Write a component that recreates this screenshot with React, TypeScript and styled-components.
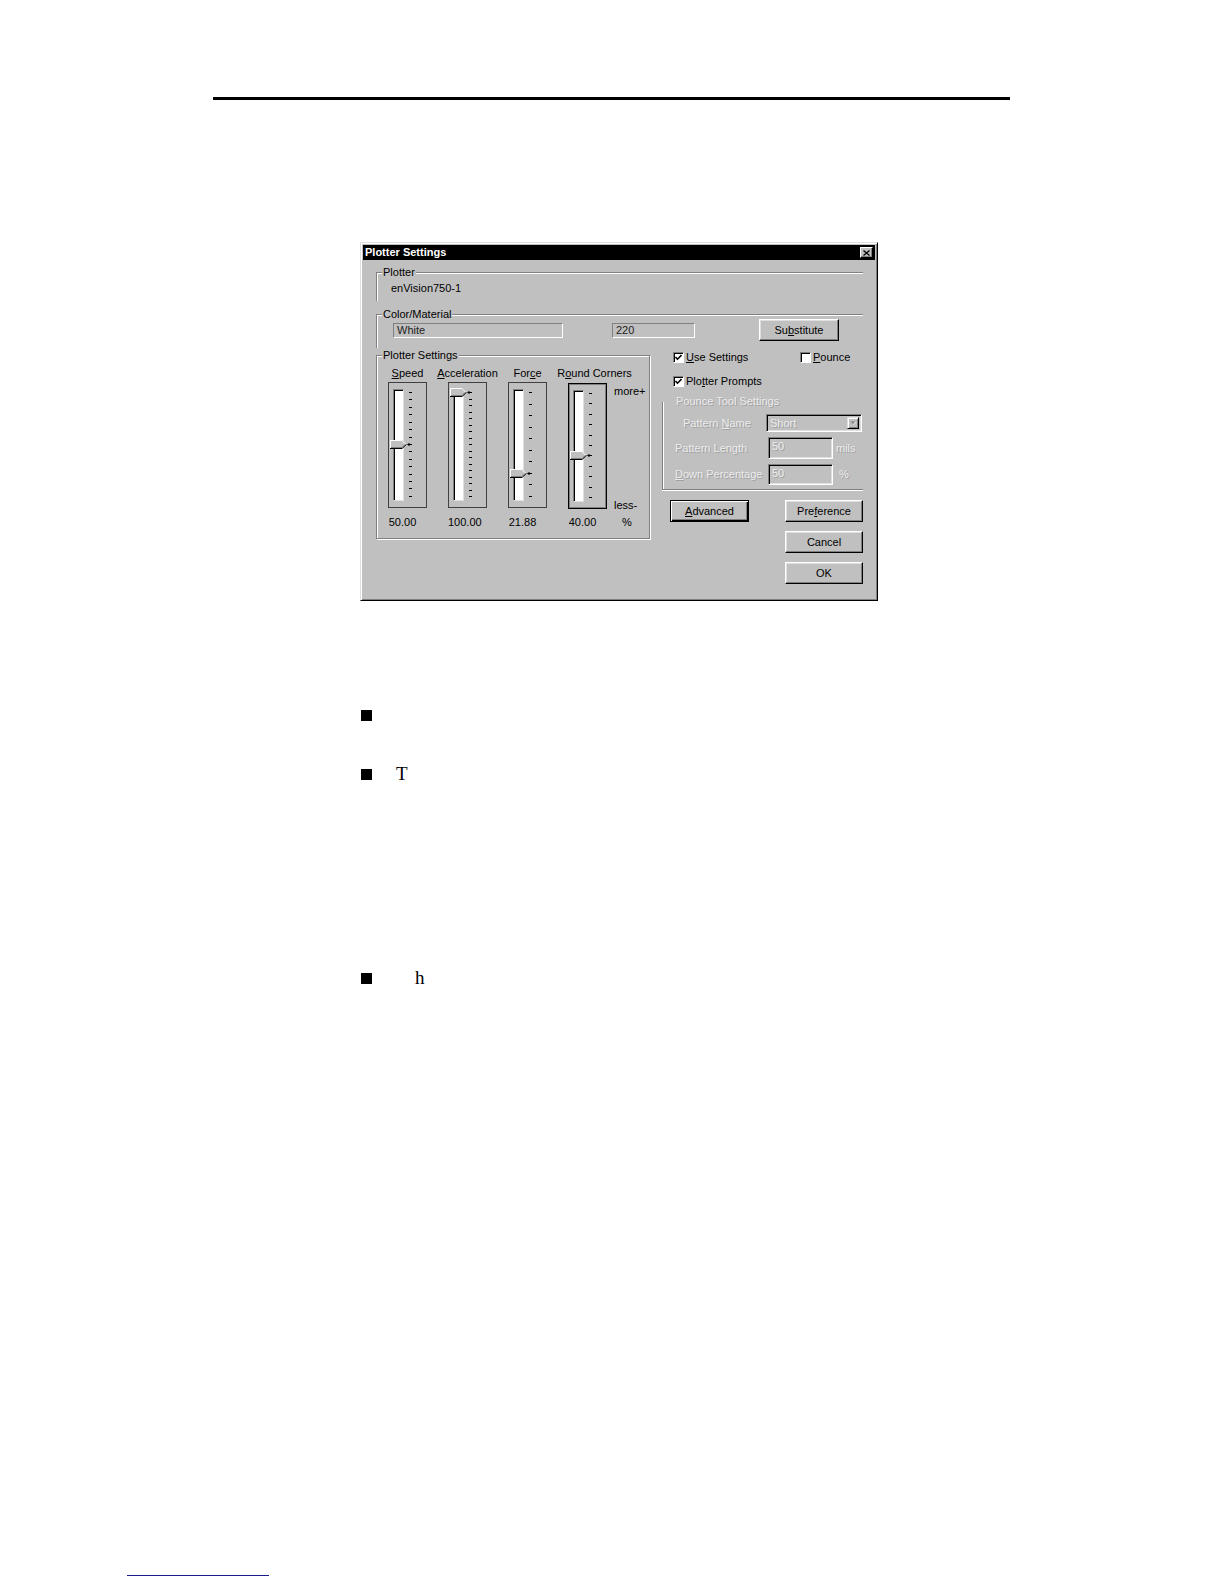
import React from "react";
import styled, { createGlobalStyle, css } from "styled-components";

const GlobalStyle = createGlobalStyle`
  html, body { margin: 0; padding: 0; background: #fff; }
  body { font-family: "Liberation Sans", Arial, sans-serif; }
`;

const disabledText = css`
  color: #ececec;
  text-shadow: 1px 1px 0 #a2a2a2;
`;

const Page = styled.div`
  width: 1224px;
  min-height: 1584px;
  box-sizing: border-box;
  padding-top: 97px;
  background: #fff;
`;

const Rule = styled.div`
  margin-left: 213px;
  width: 797px;
  height: 3px;
  background: #000;
`;

const Dialog = styled.div`
  margin: 142px 0 0 360px;
  width: 518px;
  height: 359px;
  box-sizing: border-box;
  padding: 2px;
  background: #c0c0c0;
  border: 1px solid;
  border-color: #dfdfdf #000 #000 #dfdfdf;
  box-shadow: inset 1px 1px 0 #fff, inset -1px -1px 0 #808080;
  font: 11px "Liberation Sans", Arial, sans-serif;
  color: #000;
`;

const TitleBar = styled.div`
  height: 15px;
  display: flex;
  align-items: center;
  justify-content: space-between;
  padding: 0 2px;
  background: #000;
`;

const TitleText = styled.span`
  color: #fff;
  font-weight: bold;
  line-height: 15px;
`;

const CloseButton = styled.span`
  width: 13px;
  height: 11px;
  box-sizing: border-box;
  display: flex;
  align-items: center;
  justify-content: center;
  background: #c0c0c0;
  border: 1px solid;
  border-color: #fff #000 #000 #fff;
  box-shadow: inset -1px -1px 0 #808080;
`;

const Body = styled.div`
  padding: 12px 12px 0 13px;
`;

type Edges = "tl" | "all" | "lb";

const edgeShadow: Record<Edges, string> = {
  tl: "inset 1px 1px 0 #fff",
  all: "inset 1px 1px 0 #fff, 1px 1px 0 #fff",
  lb: "inset 1px 0 0 #fff, 0 1px 0 #fff",
};

const Group = styled.div<{ $h: number; $w?: number; $edges: Edges; $mt?: number }>`
  position: relative;
  box-sizing: border-box;
  height: ${(p) => p.$h}px;
  ${(p) => p.$w && `width: ${p.$w}px; flex: none;`}
  margin-top: ${(p) => p.$mt ?? 0}px;
  border-left: 1px solid #808080;
  border-top: ${(p) => (p.$edges === "lb" ? "none" : "1px solid #808080")};
  border-right: ${(p) => (p.$edges === "all" ? "1px solid #808080" : "none")};
  border-bottom: ${(p) => (p.$edges === "tl" ? "none" : "1px solid #808080")};
  box-shadow: ${(p) => edgeShadow[p.$edges]};
`;

const Legend = styled.span<{ $left: number; $disabled?: boolean }>`
  position: absolute;
  top: -7px;
  left: ${(p) => p.$left}px;
  padding: 0 1px;
  line-height: 13px;
  background: #c0c0c0;
  white-space: nowrap;
  ${(p) => p.$disabled && disabledText}
`;

const PlotterName = styled.div`
  padding: 9px 0 0 14px;
  line-height: 13px;
`;

const ColorRow = styled.div`
  display: flex;
  align-items: center;
  padding: 4px 0 0 16px;
`;

const FlatField = styled.div<{ $w: number; $mr: number }>`
  width: ${(p) => p.$w}px;
  height: 15px;
  margin-right: ${(p) => p.$mr}px;
  box-sizing: border-box;
  padding: 0 3px;
  line-height: 13px;
  color: #222;
  border: 1px solid;
  border-color: #808080 #fff #fff #808080;
`;

const Button = styled.button<{ $w: number; $default?: boolean; $col?: number }>`
  width: ${(p) => p.$w}px;
  height: 22px;
  box-sizing: border-box;
  padding: 0;
  ${(p) => p.$col && `grid-column: ${p.$col};`}
  background: #c0c0c0;
  font: inherit;
  color: #000;
  border: 1px solid;
  border-color: #fff #000 #000 #fff;
  box-shadow: inset -1px -1px 0 #808080, inset 1px 1px 0 #dfdfdf;
  ${(p) =>
    p.$default &&
    css`
      border-color: #000;
      box-shadow: inset 1px 1px 0 #fff, inset -1px -1px 0 #000, inset -2px -2px 0 #808080;
    `}
`;

const Key = styled.span`
  text-decoration: underline;
  text-underline-offset: 1px;
`;

const mnemonic = (text: string, i: number) => (
  <>
    {text.slice(0, i)}
    <Key>{text[i]}</Key>
    {text.slice(i + 1)}
  </>
);

const MainRow = styled.div`
  display: flex;
  align-items: flex-start;
  gap: 12px;
`;

const SliderArea = styled.div`
  display: flex;
  padding: 11px 0 0 11px;
`;

const Sliders = styled.div`
  display: flex;
  gap: 21px;
`;

const SliderColumn = styled.div`
  width: 39px;
  display: flex;
  flex-direction: column;
  align-items: center;
`;

const ColLabel = styled.div<{ $shift?: number }>`
  line-height: 13px;
  margin: 0 0 2px ${(p) => p.$shift ?? 0}px;
  white-space: nowrap;
`;

const Frame = styled.div<{ $focused?: boolean }>`
  width: 39px;
  height: 126px;
  box-sizing: border-box;
  display: flex;
  align-items: flex-start;
  padding: 6px 0 0 4px;
  border: 1px solid #404040;
  ${(p) =>
    p.$focused &&
    css`
      margin-top: 1px;
      border-color: #000;
      box-shadow: inset 0 0 0 1px #808080;
    `}
`;

const Track = styled.div`
  position: relative;
  width: 11px;
  height: 112px;
  box-sizing: border-box;
  background: #fff;
  border: 1px solid;
  border-color: #808080 #dfdfdf #dfdfdf #808080;
  box-shadow: inset 1px 1px 0 #000;
`;

const Thumb = styled.svg`
  position: absolute;
  left: -4px;
  width: 20px;
  height: 9px;
`;

const Ticks = styled.div`
  height: 105px;
  margin: 3px 0 0 5px;
  display: flex;
  flex-direction: column;
  justify-content: space-between;
`;

const Tick = styled.span`
  width: 3px;
  height: 1px;
  background: #000;
`;

const Value = styled.div<{ $focused?: boolean }>`
  width: 39px;
  box-sizing: border-box;
  margin-top: ${(p) => (p.$focused ? 7 : 8)}px;
  padding-right: 10px;
  line-height: 13px;
  text-align: center;
  white-space: nowrap;
`;

const ScaleColumn = styled.div`
  margin-left: 7px;
  padding-top: 15px;
  display: flex;
  flex-direction: column;
  line-height: 13px;
`;

const ScaleEnds = styled.div`
  height: 130px;
  box-sizing: border-box;
  padding-top: 3px;
  display: flex;
  flex-direction: column;
  justify-content: space-between;
`;

const Percent = styled.div`
  margin-top: 4px;
  padding-left: 8px;
`;

const RightCol = styled.div`
  width: 201px;
  margin-top: 1px;
  display: flex;
  flex-direction: column;
`;

const CheckRow = styled.div<{ $mt?: number }>`
  display: grid;
  grid-template-columns: 127px auto;
  align-items: center;
  height: 16px;
  margin-top: ${(p) => p.$mt ?? 0}px;
  padding-left: 11px;
`;

const CheckItem = styled.label`
  display: flex;
  align-items: center;
  gap: 2px;
  line-height: 13px;
`;

const CheckBox = styled.span`
  width: 11px;
  height: 11px;
  box-sizing: border-box;
  display: flex;
  align-items: center;
  justify-content: center;
  background: #fff;
  border: 1px solid;
  border-color: #808080 #fff #fff #808080;
  box-shadow: inset 1px 1px 0 #000;
`;

const PounceGrid = styled.div`
  display: grid;
  grid-template-columns: 93px 65px auto;
  grid-template-rows: 18px 22px 21px;
  row-gap: 5px;
  align-items: center;
  padding: 12px 0 0 12px;
`;

const DisabledLabel = styled.span<{ $pl?: number }>`
  padding-left: ${(p) => p.$pl ?? 0}px;
  line-height: 13px;
  white-space: nowrap;
  ${disabledText}
`;

const sunken = css`
  box-sizing: border-box;
  background: #c0c0c0;
  border: 1px solid;
  border-color: #808080 #fff #fff #808080;
  box-shadow: inset 1px 1px 0 #000, inset -1px -1px 0 #dfdfdf;
`;

const Combo = styled.div`
  ${sunken}
  grid-column: 2 / span 2;
  width: 96px;
  height: 18px;
  margin-left: -2px;
  display: flex;
  align-items: stretch;
  justify-content: space-between;
  padding: 2px 2px 2px 3px;
  line-height: 12px;
`;

const ComboButton = styled.span`
  width: 12px;
  box-sizing: border-box;
  display: flex;
  align-items: center;
  justify-content: center;
  border: 1px solid;
  border-color: #dfdfdf #000 #000 #dfdfdf;
  box-shadow: inset 1px 1px 0 #fff, inset -1px -1px 0 #808080;
`;

const DisabledInput = styled.div<{ $h: number }>`
  ${sunken}
  width: 65px;
  height: ${(p) => p.$h}px;
  padding: 2px 0 0 3px;
  line-height: 13px;
`;

const ButtonGrid = styled.div`
  display: grid;
  grid-template-columns: 79px 78px;
  column-gap: 36px;
  row-gap: 9px;
  margin-top: 10px;
  padding-left: 8px;
`;

const BulletList = styled.div`
  margin: 103px 0 0 361px;
`;

const Item = styled.div<{ $mt?: number }>`
  display: flex;
  align-items: center;
  height: 22px;
  margin-top: ${(p) => p.$mt ?? 0}px;
`;

const Bullet = styled.span`
  width: 11px;
  height: 11px;
  background: #000;
  flex: none;
`;

const ItemText = styled.span<{ $gap: number }>`
  margin-left: ${(p) => p.$gap}px;
  font: 19px/22px "Liberation Serif", "Times New Roman", serif;
  color: #000;
`;

const FooterLine = styled.div`
  margin: 586px 0 0 127px;
  width: 142px;
  height: 1px;
  background: #1c1f8a;
`;

interface SliderSpec {
  label: string;
  key: number;
  value: number;
  shown: string;
  ticks: number;
  focused?: boolean;
  shift?: number;
}

const sliders: SliderSpec[] = [
  { label: "Speed", key: 0, value: 50, shown: "50.00", ticks: 15 },
  { label: "Acceleration", key: 0, value: 100, shown: "100.00", ticks: 17 },
  { label: "Force", key: 3, value: 21.88, shown: "21.88", ticks: 10 },
  { label: "Round Corners", key: 1, value: 40, shown: "40.00", ticks: 11, focused: true, shift: 14 },
];

const ThumbShape = () => (
  <>
    <polygon points="0,0 12,0 16,4.5 12,9 0,9" fill="#c0c0c0" />
    <path d="M0.5 8.5 V0.5 H12 L15.5 4" stroke="#fff" fill="none" />
    <path d="M1 7.5 H12 L15 4.5" stroke="#808080" fill="none" />
    <path d="M0 8.5 H12.2 L16.3 4.4" stroke="#000" fill="none" />
    <polygon points="17,4.5 19.5,2.8 19.5,6.2" fill="#000" />
  </>
);

const Slider: React.FC<{ spec: SliderSpec }> = ({ spec }) => {
  const top = Math.round(-2.5 + (1 - spec.value / 100) * 104);
  return (
    <SliderColumn>
      <ColLabel $shift={spec.shift}>{mnemonic(spec.label, spec.key)}</ColLabel>
      <Frame $focused={spec.focused}>
        <Track>
          <Thumb viewBox="0 0 20 9" style={{ top }}>
            <ThumbShape />
          </Thumb>
        </Track>
        <Ticks>
          {Array.from({ length: spec.ticks }, (_, i) => (
            <Tick key={i} />
          ))}
        </Ticks>
      </Frame>
      <Value $focused={spec.focused}>{spec.shown}</Value>
    </SliderColumn>
  );
};

const Check: React.FC<{ checked?: boolean; children: React.ReactNode }> = ({ checked, children }) => (
  <CheckItem>
    <CheckBox>
      {checked && (
        <svg width="7" height="7" viewBox="0 0 7 7">
          <path d="M0.5 3 L2.5 5.2 L6.5 1" stroke="#000" strokeWidth="1.6" fill="none" />
        </svg>
      )}
    </CheckBox>
    <span>{children}</span>
  </CheckItem>
);

export default function App() {
  return (
    <>
      <GlobalStyle />
      <Page>
        <Rule />
        <Dialog>
          <TitleBar>
            <TitleText>Plotter Settings</TitleText>
            <CloseButton>
              <svg width="7" height="6" viewBox="0 0 7 6">
                <path d="M0.5 0.5 L6.5 5.5 M6.5 0.5 L0.5 5.5" stroke="#000" strokeWidth="1.3" />
              </svg>
            </CloseButton>
          </TitleBar>
          <Body>
            <Group $h={29} $edges="tl">
              <Legend $left={5}>Plotter</Legend>
              <PlotterName>enVision750-1</PlotterName>
            </Group>
            <Group $h={34} $edges="tl" $mt={13}>
              <Legend $left={5}>Color/Material</Legend>
              <ColorRow>
                <FlatField $w={170} $mr={49}>White</FlatField>
                <FlatField $w={83} $mr={64}>220</FlatField>
                <Button $w={80}>{mnemonic("Substitute", 2)}</Button>
              </ColorRow>
            </Group>
            <MainRow>
              <Group $h={184} $w={274} $edges="all" $mt={7}>
                <Legend $left={5}>Plotter Settings</Legend>
                <SliderArea>
                  <Sliders>
                    {sliders.map((s) => (
                      <Slider key={s.label} spec={s} />
                    ))}
                  </Sliders>
                  <ScaleColumn>
                    <ScaleEnds>
                      <span>more+</span>
                      <span>less-</span>
                    </ScaleEnds>
                    <Percent>%</Percent>
                  </ScaleColumn>
                </SliderArea>
              </Group>
              <RightCol>
                <CheckRow>
                  <Check checked>{mnemonic("Use Settings", 0)}</Check>
                  <Check>{mnemonic("Pounce", 0)}</Check>
                </CheckRow>
                <CheckRow $mt={8}>
                  <Check checked>{mnemonic("Plotter Prompts", 3)}</Check>
                </CheckRow>
                <Group $h={88} $w={201} $edges="lb" $mt={13}>
                  <Legend $left={12} $disabled>
                    Pounce Tool Settings
                  </Legend>
                  <PounceGrid>
                    <DisabledLabel $pl={8}>{mnemonic("Pattern Name", 8)}</DisabledLabel>
                    <Combo>
                      <DisabledLabel>Short</DisabledLabel>
                      <ComboButton>
                        <svg width="7" height="5" viewBox="0 0 7 5">
                          <polygon points="1,1 6,1 3.5,3.8" fill="#fff" />
                          <polygon points="0.5,0.5 5.5,0.5 3,3.3" fill="#808080" />
                        </svg>
                      </ComboButton>
                    </Combo>
                    <DisabledLabel>Pattern Length</DisabledLabel>
                    <DisabledInput $h={22}>
                      <DisabledLabel>50</DisabledLabel>
                    </DisabledInput>
                    <DisabledLabel $pl={3}>mils</DisabledLabel>
                    <DisabledLabel>{mnemonic("Down Percentage", 0)}</DisabledLabel>
                    <DisabledInput $h={21}>
                      <DisabledLabel>50</DisabledLabel>
                    </DisabledInput>
                    <DisabledLabel $pl={6}>%</DisabledLabel>
                  </PounceGrid>
                </Group>
                <ButtonGrid>
                  <Button $w={79} $default>
                    {mnemonic("Advanced", 0)}
                  </Button>
                  <Button $w={78}>{mnemonic("Preference", 3)}</Button>
                  <Button $w={78} $col={2}>
                    Cancel
                  </Button>
                  <Button $w={78} $col={2}>
                    OK
                  </Button>
                </ButtonGrid>
              </RightCol>
            </MainRow>
          </Body>
        </Dialog>
        <BulletList>
          <Item>
            <Bullet />
          </Item>
          <Item $mt={37}>
            <Bullet />
            <ItemText $gap={24}>T</ItemText>
          </Item>
          <Item $mt={182}>
            <Bullet />
            <ItemText $gap={43}>h</ItemText>
          </Item>
        </BulletList>
        <FooterLine />
      </Page>
    </>
  );
}
